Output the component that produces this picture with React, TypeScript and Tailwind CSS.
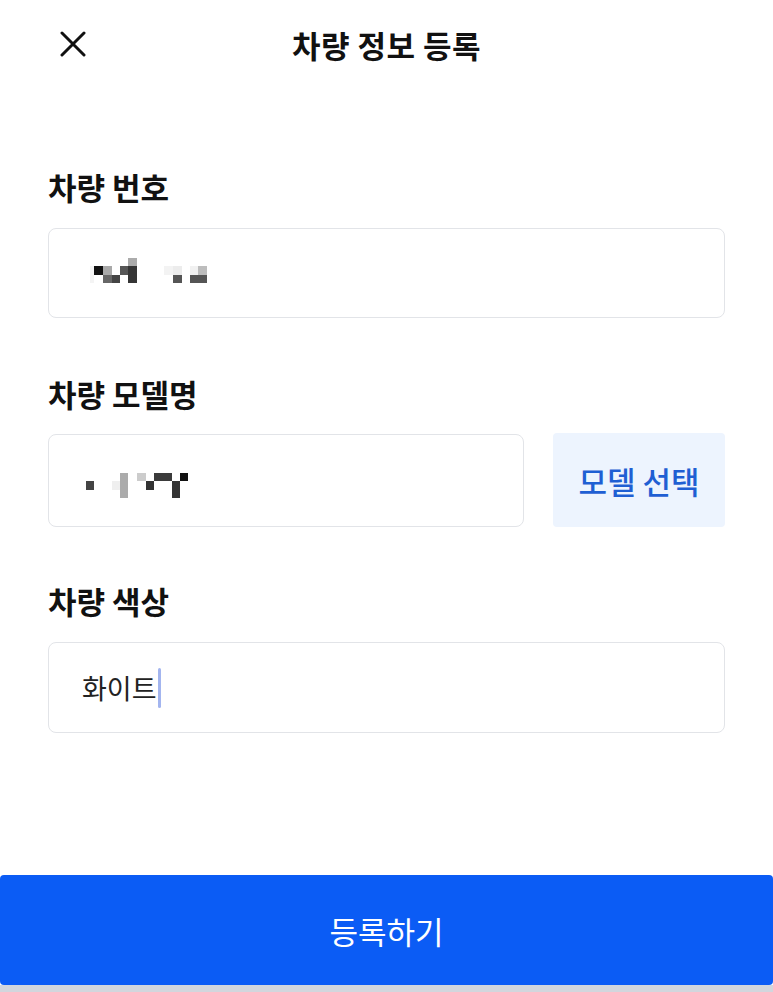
import React from 'react';

const FONT = { fontFamily: '"Noto Sans CJK KR", "Noto Sans", sans-serif' };

type Cell = [number, number, number, number, string];

// blurred / pixelated plate and model text, as in the picture
const plateCells: Cell[] = [
  [0, 10, 4, 17, '#f4f4f4'],
  [4, 10, 9, 9, '#111111'],
  [13, 10, 9, 9, '#a9a9a9'],
  [13, 19, 9, 8, '#676767'],
  [22, 19, 8, 8, '#444444'],
  [30, 10, 8, 9, '#565656'],
  [38, 2, 9, 8, '#ababab'],
  [38, 10, 9, 17, '#353535'],
  [74, 10, 9, 9, '#f3f3f3'],
  [83, 10, 9, 9, '#ececec'],
  [83, 19, 9, 8, '#555555'],
  [100, 10, 8, 9, '#f1f1f1'],
  [108, 10, 9, 9, '#bdbdbd'],
  [100, 19, 17, 8, '#555555'],
];

const modelCells: Cell[] = [
  [4, 11, 8, 9, '#444444'],
  [30, 11, 8, 9, '#efefef'],
  [38, 3, 8, 25, '#ababab'],
  [55, 3, 9, 8, '#cccccc'],
  [64, 11, 8, 9, '#333333'],
  [72, 3, 18, 8, '#3b3b3b'],
  [90, 11, 8, 17, '#343434'],
  [98, 3, 8, 8, '#111111'],
];

const Mosaic: React.FC<{ cells: Cell[]; w: number; h: number; className?: string }> = ({ cells, w, h, className }) => (
  <svg width={w} height={h} viewBox={`0 0 ${w} ${h}`} className={className}>
    {cells.map(([x, y, cw, ch, c], i) => (
      <rect key={i} x={x} y={y} width={cw} height={ch} fill={c} />
    ))}
  </svg>
);

const Label: React.FC<{ children: React.ReactNode }> = ({ children }) => (
  <div className="h-[40px] flex items-center text-[31px] font-bold text-[#111111] leading-none">
    {children}
  </div>
);

export default function App() {
  return (
    <div className="min-h-[992px] w-full bg-white flex flex-col" style={FONT}>
      {/* header */}
      <div className="h-[88px] flex items-center px-[60px]">
        <button className="w-[26px] h-[26px] flex items-center justify-center">
          <svg width="26" height="26" viewBox="0 0 26 26">
            <path d="M2 2 L24 24 M24 2 L2 24" stroke="#111111" strokeWidth="3" strokeLinecap="round" />
          </svg>
        </button>
        <div className="flex-1 text-center text-[31px] font-bold tracking-[0.5px] text-[#111111] leading-none pr-[26px]">
          차량 정보 등록
        </div>
      </div>

      <div className="px-[48px] pt-[78px] flex flex-col">
        <Label>차량 번호</Label>
        <div className="mt-[22px] h-[90px] rounded-[8px] border-[1.5px] border-[#e2e4e8] flex items-center pl-[41px]">
          <Mosaic cells={plateCells} w={120} h={30} className="-mt-[4px]" />
        </div>

        <div className="mt-[55px]">
          <Label>차량 모델명</Label>
        </div>
        <div className="mt-[21px] flex gap-[29px]">
          <div className="flex-1 h-[93px] rounded-[8px] border-[1.5px] border-[#e2e4e8] flex items-center pl-[33px]">
            <Mosaic cells={modelCells} w={110} h={32} className="mt-[11px]" />
          </div>
          <button className="w-[172px] h-[94px] -mt-[1px] rounded-[4px] bg-[#edf4fe] text-[#1f5fd3] text-[31px] font-medium leading-none">
            모델 선택
          </button>
        </div>

        <div className="mt-[53px]">
          <Label>차량 색상</Label>
        </div>
        <div className="mt-[22px] h-[91px] rounded-[8px] border-[1.5px] border-[#e2e4e8] flex items-center px-[33px]">
          <span className="text-[27px] text-[#222222] leading-none">화이트</span>
          <span className="ml-[1px] w-[3px] h-[40px] rounded-full bg-[#a3b5ef]" />
        </div>
      </div>

      <div className="mt-auto">
        <button className="w-full h-[110px] rounded-[4px] bg-[#0b5cf5] text-white text-[31px] leading-none">
          등록하기
        </button>
        <div className="h-[7px] bg-[#d2d6dd]" />
      </div>
    </div>
  );
}
